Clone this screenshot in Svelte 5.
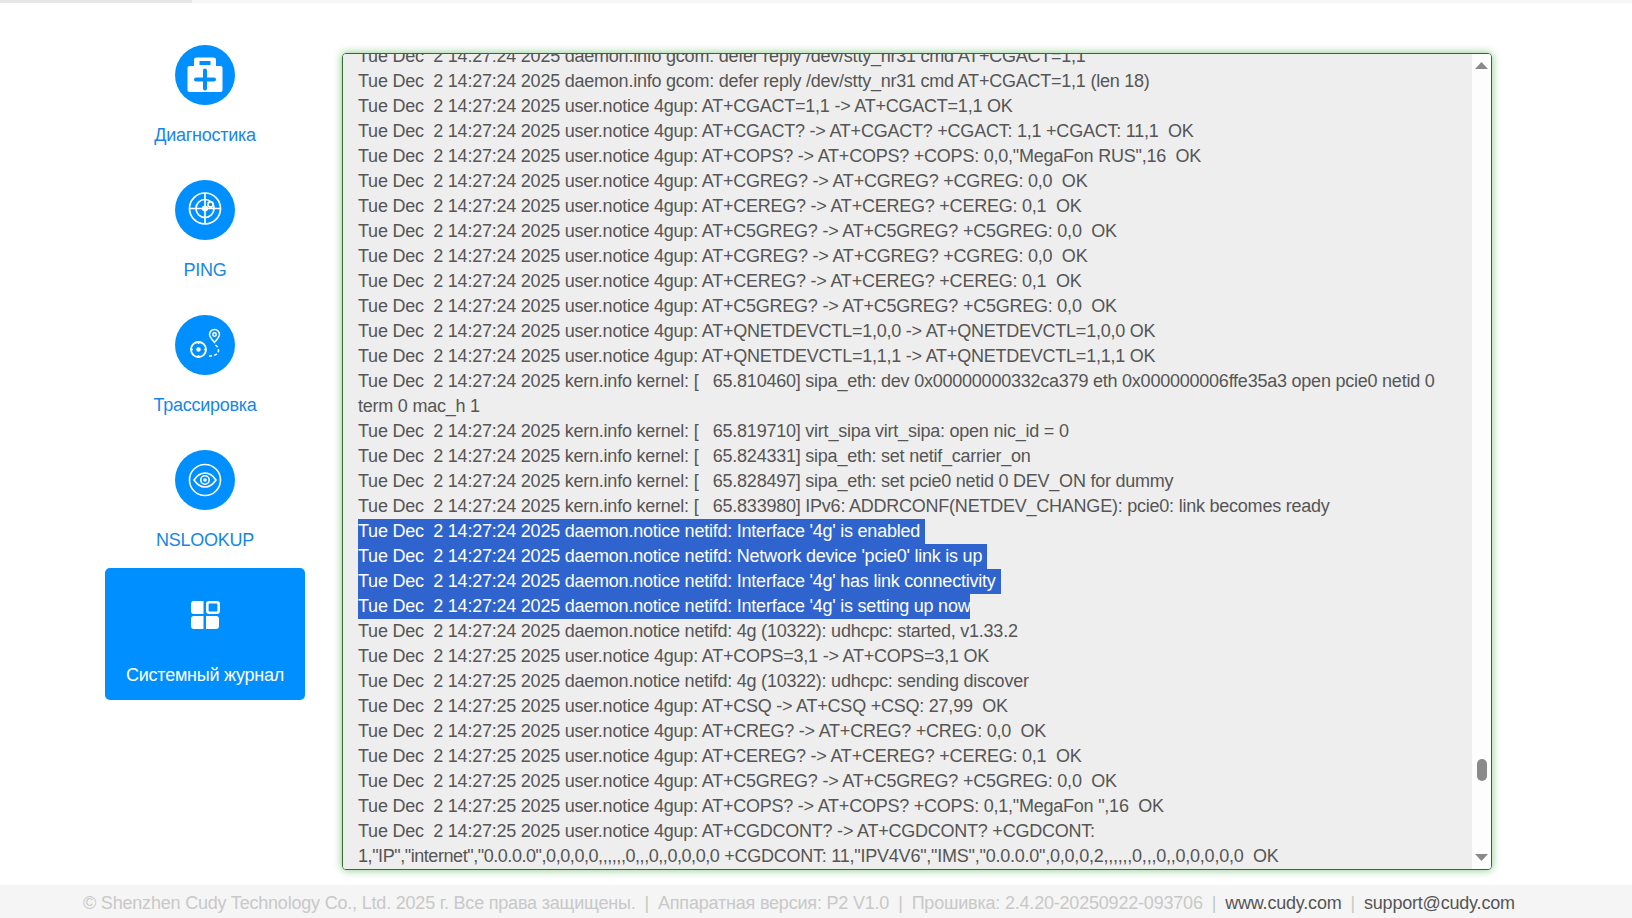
<script>
    const d24 = "Tue Dec  2 14:27:24 2025 ";
    const d25 = "Tue Dec  2 14:27:25 2025 ";

    const menu = [
        { id: "kit", label: "Диагностика" },
        { id: "radar", label: "PING" },
        { id: "route", label: "Трассировка" },
        { id: "eye", label: "NSLOOKUP" },
        { id: "grid", label: "Системный журнал", active: true },
    ];

    const lines = [
        d24 + "daemon.info gcom: defer reply /dev/stty_nr31 cmd AT+CGACT=1,1",
        d24 + "daemon.info gcom: defer reply /dev/stty_nr31 cmd AT+CGACT=1,1 (len 18)",
        d24 + "user.notice 4gup: AT+CGACT=1,1 -> AT+CGACT=1,1 OK",
        d24 + "user.notice 4gup: AT+CGACT? -> AT+CGACT? +CGACT: 1,1 +CGACT: 11,1  OK",
        d24 + 'user.notice 4gup: AT+COPS? -> AT+COPS? +COPS: 0,0,"MegaFon RUS",16  OK',
        d24 + "user.notice 4gup: AT+CGREG? -> AT+CGREG? +CGREG: 0,0  OK",
        d24 + "user.notice 4gup: AT+CEREG? -> AT+CEREG? +CEREG: 0,1  OK",
        d24 + "user.notice 4gup: AT+C5GREG? -> AT+C5GREG? +C5GREG: 0,0  OK",
        d24 + "user.notice 4gup: AT+CGREG? -> AT+CGREG? +CGREG: 0,0  OK",
        d24 + "user.notice 4gup: AT+CEREG? -> AT+CEREG? +CEREG: 0,1  OK",
        d24 + "user.notice 4gup: AT+C5GREG? -> AT+C5GREG? +C5GREG: 0,0  OK",
        d24 + "user.notice 4gup: AT+QNETDEVCTL=1,0,0 -> AT+QNETDEVCTL=1,0,0 OK",
        d24 + "user.notice 4gup: AT+QNETDEVCTL=1,1,1 -> AT+QNETDEVCTL=1,1,1 OK",
        d24 + "kern.info kernel: [   65.810460] sipa_eth: dev 0x00000000332ca379 eth 0x000000006ffe35a3 open pcie0 netid 0 term 0 mac_h 1",
        d24 + "kern.info kernel: [   65.819710] virt_sipa virt_sipa: open nic_id = 0",
        d24 + "kern.info kernel: [   65.824331] sipa_eth: set netif_carrier_on",
        d24 + "kern.info kernel: [   65.828497] sipa_eth: set pcie0 netid 0 DEV_ON for dummy",
        d24 + "kern.info kernel: [   65.833980] IPv6: ADDRCONF(NETDEV_CHANGE): pcie0: link becomes ready",
        { sel: d24 + "daemon.notice netifd: Interface '4g' is enabled" },
        { sel: d24 + "daemon.notice netifd: Network device 'pcie0' link is up" },
        { sel: d24 + "daemon.notice netifd: Interface '4g' has link connectivity" },
        { sel: d24 + "daemon.notice netifd: Interface '4g' is setting up now", last: true },
        d24 + "daemon.notice netifd: 4g (10322): udhcpc: started, v1.33.2",
        d25 + "user.notice 4gup: AT+COPS=3,1 -> AT+COPS=3,1 OK",
        d25 + "daemon.notice netifd: 4g (10322): udhcpc: sending discover",
        d25 + "user.notice 4gup: AT+CSQ -> AT+CSQ +CSQ: 27,99  OK",
        d25 + "user.notice 4gup: AT+CREG? -> AT+CREG? +CREG: 0,0  OK",
        d25 + "user.notice 4gup: AT+CEREG? -> AT+CEREG? +CEREG: 0,1  OK",
        d25 + "user.notice 4gup: AT+C5GREG? -> AT+C5GREG? +C5GREG: 0,0  OK",
        d25 + 'user.notice 4gup: AT+COPS? -> AT+COPS? +COPS: 0,1,"MegaFon ",16  OK',
        {
            head: d25 + "user.notice 4gup: AT+CGDCONT? -> AT+CGDCONT? +CGDCONT: ",
            tight: '1,"IP","internet","0.0.0.0",0,0,0,0,,,,,,0,,,0,,0,0,0,0',
            tail: ' +CGDCONT: 11,"IPV4V6","IMS","0.0.0.0",0,0,0,2,,,,,,0,,,0,,0,0,0,0,0  OK',
        },
    ];
</script>

<div class="page">
    <div class="loader"><div class="loader-bar"></div></div>

    <main class="main">
        <nav class="side">
            {#each menu as m}
                <div class="item" class:active={m.active}>
                    <div class="ico">
                        {#if m.id === "kit"}
                            <svg viewBox="0 0 60 60" width="60" height="60">
                                <path fill="#fff" fill-rule="evenodd" d="M21.500 12.500h17a2.500 2.500 0 0 1 2.500 2.500v6h4.500a2 2 0 0 1 2 2v22a2 2 0 0 1-2 2h-31a2 2 0 0 1-2-2V23a2 2 0 0 1 2-2H19v-6a2.500 2.500 0 0 1 2.500-2.500zM24.500 16v4h11v-4z"/>
                                <path stroke="#008fff" stroke-width="4" stroke-linecap="round" d="M21 34.500h18M30 25.500v18"/>
                            </svg>
                        {:else if m.id === "radar"}
                            <svg viewBox="0 0 60 60" width="60" height="60" fill="none" stroke="#fff" stroke-width="1.700">
                                <circle cx="30" cy="28.500" r="15.500"/>
                                <circle cx="30" cy="28.500" r="9"/>
                                <path d="M14.500 28.500h31M30 13v31"/>
                                <circle cx="30" cy="28.500" r="2.200" fill="#fff"/>
                                <circle cx="35.500" cy="24.500" r="2.600" fill="#008fff"/>
                            </svg>
                        {:else if m.id === "route"}
                            <svg viewBox="0 0 60 60" width="60" height="60" fill="none" stroke="#fff" stroke-width="1.500">
                                <circle cx="23.500" cy="34.500" r="7.500" stroke-width="1.800"/>
                                <circle cx="23.500" cy="34.500" r="2.200" fill="#fff" stroke="none"/>
                                <path d="M23.500 26v3M23.500 40v3M15 34.500h3M29 34.500h3"/>
                                <path d="M39.500 27.500c-3-3.500-5-5.800-5-8a5 5 0 0 1 10 0c0 2.200-2 4.500-5 8z"/>
                                <circle cx="39.500" cy="19.500" r="1.700"/>
                                <path stroke-dasharray="3 2.200" d="M40.500 30c2 1.500 3 3 3 5.500 0 3.500-3.500 5.500-9.500 5.500"/>
                            </svg>
                        {:else if m.id === "eye"}
                            <svg viewBox="0 0 60 60" width="60" height="60" fill="none" stroke="#fff" stroke-width="1.600">
                                <circle cx="30" cy="30" r="15.500"/>
                                <path d="M19 30c3-4.500 7-7 11-7s8 2.500 11 7c-3 4.500-7 7-11 7s-8-2.500-11-7z"/>
                                <circle cx="30" cy="30" r="4.200"/>
                                <circle cx="30" cy="30" r="1.800" fill="#fff" stroke="none"/>
                            </svg>
                        {:else}
                            <svg viewBox="0 0 60 60" width="60" height="60" fill="#fff">
                                <path d="M19 16h9.500v13H19a3 3 0 0 1-3-3v-7a3 3 0 0 1 3-3z"/>
                                <rect x="32.300" y="17.300" width="11.400" height="10.400" rx="2" fill="none" stroke="#fff" stroke-width="2.600"/>
                                <path d="M16 34a3 3 0 0 1 3-3h9.500v13H19a3 3 0 0 1-3-3z"/>
                                <path d="M31 31h10a3 3 0 0 1 3 3v7a3 3 0 0 1-3 3H31z"/>
                            </svg>
                        {/if}
                    </div>
                    <div class="lbl">{m.label}</div>
                </div>
            {/each}
        </nav>

        <section class="logbox">
            <div class="logview">
                <div class="logtext">
                    {#each lines as l}
                        {#if typeof l === "string"}
                            <div class="ln">{l}</div>
                        {:else if l.sel}
                            <div class="ln"><span class="sel" class:last={l.last}>{l.sel}</span></div>
                        {:else}
                            <div class="ln">{l.head}<span class="tight">{l.tight}</span>{l.tail}</div>
                        {/if}
                    {/each}
                </div>
            </div>
            <div class="scroll">
                <svg class="arrow" viewBox="0 0 13 7" width="13" height="7"><path d="M6.500 0L13 7H0z" fill="#8a8a8a"/></svg>
                <div class="thumb"></div>
                <svg class="arrow" viewBox="0 0 13 7" width="13" height="7"><path d="M0 0h13L6.500 7z" fill="#8a8a8a"/></svg>
            </div>
        </section>
    </main>

    <footer class="foot">
        <span>© Shenzhen Cudy Technology Co., Ltd. 2025 г. Все права защищены.</span>
        <i>|</i>
        <span>Аппаратная версия: P2 V1.0</span>
        <i>|</i>
        <span>Прошивка: 2.4.20-20250922-093706</span>
        <i>|</i>
        <a href="#top">www.cudy.com</a>
        <i>|</i>
        <a href="#top">support@cudy.com</a>
    </footer>
</div>

<style>
    :global(body) {
        margin: 0;
        background: #fff;
        font-family: "Liberation Sans", Arial, sans-serif;
    }
    .page {
        height: 918px;
        display: flex;
        flex-direction: column;
        overflow: hidden;
    }
    .loader {
        height: 3px;
        background: #f7f7f7;
    }
    .loader-bar {
        width: 192px;
        height: 3px;
        background: #e6e6e6;
    }
    .main {
        flex: 1;
        min-height: 0;
        display: flex;
        gap: 37px;
        padding: 50px 140px 15px 105px;
    }
    .side {
        width: 200px;
        flex: none;
        display: flex;
        flex-direction: column;
        gap: 3px;
        margin-top: -25px;
    }
    .item {
        height: 132px;
        box-sizing: border-box;
        padding-top: 17px;
        border-radius: 5px;
        display: flex;
        flex-direction: column;
        align-items: center;
        color: #1786ea;
    }
    .item.active {
        background: #008fff;
        color: #fff;
    }
    .ico {
        width: 60px;
        height: 60px;
        border-radius: 50%;
        background: #008fff;
    }
    .ico svg {
        display: block;
    }
    .lbl {
        font-size: 18px;
        line-height: 24px;
        margin-top: 18px;
        letter-spacing: -0.25px;
    }
    .logbox {
        flex: 1;
        min-width: 0;
        display: flex;
        border: 1px solid #2f6b33;
        border-radius: 4px;
        box-shadow: 0 0 9px rgba(76, 175, 80, 0.7);
        overflow: hidden;
    }
    .logview {
        flex: 1;
        min-width: 0;
        background: #eeeeee;
        overflow: hidden;
    }
    .logtext {
        margin-top: -10px;
        padding: 0 16px 0 15px;
        font-size: 18px;
        line-height: 25px;
        letter-spacing: -0.23px;
        color: #555;
        white-space: pre-wrap;
        word-break: normal;
    }
    .tight {
        letter-spacing: -0.44px;
    }
    .sel {
        display: inline-block;
        background: #2f64cf;
        color: #fff;
        padding-right: 5px;
    }
    .sel.last {
        padding-right: 0;
    }
    .scroll {
        width: 19px;
        flex: none;
        background: #fdfdfd;
        display: flex;
        flex-direction: column;
        align-items: center;
        padding: 8px 0 8px;
    }
    .arrow {
        display: block;
        flex: none;
    }
    .thumb {
        width: 10px;
        height: 22px;
        border-radius: 5px;
        background: #8a8a8a;
        margin-top: 690px;
        margin-bottom: auto;
    }
    .foot {
        height: 33px;
        box-sizing: border-box;
        padding: 4px 0 0 83px;
        flex: none;
        background: #f5f5f5;
        display: flex;
        align-items: center;
        font-size: 18px;
        letter-spacing: -0.2px;
        color: #c8c8c8;
        white-space: nowrap;
    }
    .foot i {
        font-style: normal;
        margin: 0 9px;
    }
    .foot a {
        color: #555;
        text-decoration: none;
    }
</style>
